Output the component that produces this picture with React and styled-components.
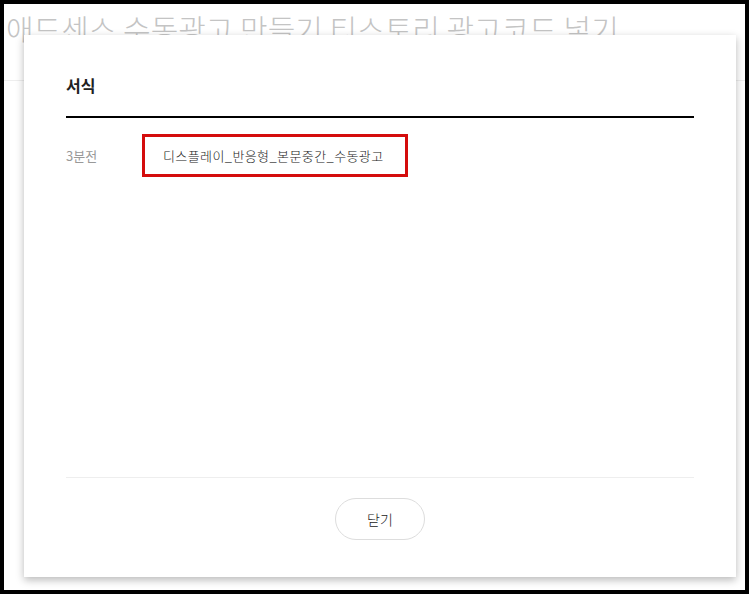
import React from "react"
import styled, { createGlobalStyle } from "styled-components"

const GlobalStyle = createGlobalStyle`
  html, body {
    margin: 0;
    padding: 0;
    background: #000;
  }
  body {
    font-family: "Noto Sans CJK KR", "Noto Sans", sans-serif;
  }
`

const Screen = styled.div`
  position: relative;
  box-sizing: border-box;
  width: 749px;
  height: 594px;
  border: 4px solid #000;
  background: #fff;
  overflow: hidden;
`

const PageHead = styled.div`
  height: 76px;
  border-bottom: 1px solid #eee;
`

const PageTitle = styled.h1`
  margin: 0;
  padding: 6px 0 0 2px;
  font-size: 30px;
  font-weight: 300;
  line-height: 37px;
  color: #c4c4c4;
  white-space: nowrap;
`

const Modal = styled.div`
  position: absolute;
  left: 20px;
  top: 31px;
  width: 712px;
  height: 542px;
  display: flex;
  flex-direction: column;
  box-sizing: border-box;
  padding: 0 42px;
  background: #fff;
  box-shadow: 0 3px 8px rgba(0, 0, 0, 0.28);
`

const ModalHead = styled.div`
  padding: 38px 0 19px;
  border-bottom: 2px solid #000;
`

const ModalTitle = styled.h2`
  margin: 0;
  font-size: 16px;
  font-weight: 700;
  line-height: 24px;
  color: #222;
`

const ModalBody = styled.div`
  flex: 1;
  padding-top: 16px;
`

const Row = styled.div`
  display: flex;
  align-items: center;
`

const Label = styled.span`
  width: 76px;
  font-size: 13px;
  color: #999;
`

const Highlight = styled.div`
  box-sizing: border-box;
  width: 266px;
  height: 43px;
  display: flex;
  align-items: center;
  padding-left: 18px;
  border: 3px solid #d40c0c;
  font-size: 13px;
  font-weight: 300;
  letter-spacing: 0.4px;
  color: #222;
`

const ModalFoot = styled.div`
  height: 100px;
  display: flex;
  justify-content: center;
  padding-top: 20px;
  box-sizing: border-box;
  border-top: 1px solid #eee;
`

const CloseButton = styled.button`
  width: 90px;
  height: 42px;
  border: 1px solid #ddd;
  border-radius: 21px;
  background: #fff;
  font-family: inherit;
  font-size: 14px;
  font-weight: 300;
  color: #222;
  cursor: pointer;
`

export default function App() {
  return (
    <Screen>
      <GlobalStyle />
      <PageHead>
        <PageTitle>애드센스 수동광고 만들기 티스토리 광고코드 넣기</PageTitle>
      </PageHead>
      <Modal>
        <ModalHead>
          <ModalTitle>서식</ModalTitle>
        </ModalHead>
        <ModalBody>
          <Row>
            <Label>3분전</Label>
            <Highlight>디스플레이_반응형_본문중간_수동광고</Highlight>
          </Row>
        </ModalBody>
        <ModalFoot>
          <CloseButton>닫기</CloseButton>
        </ModalFoot>
      </Modal>
    </Screen>
  )
}
